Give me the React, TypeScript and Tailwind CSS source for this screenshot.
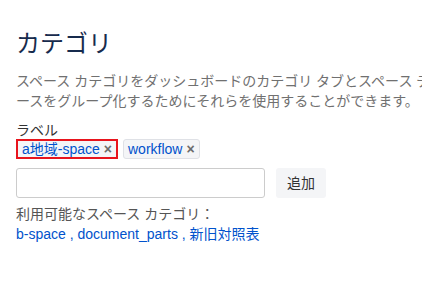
const font = { fontFamily: '"Liberation Sans", "Noto Sans CJK JP", sans-serif' };

const Tag = ({ label, highlighted }: { label: string; highlighted?: boolean }) => (
  <span
    className={
      highlighted
        ? 'inline-flex items-center h-[20px] px-[4px] border-2 border-[#e8141d] bg-[#f4f5f7] text-[#0052cc] text-[14px] leading-none'
        : 'inline-flex items-center h-[20px] px-[4px] border border-[#dfe1e6] rounded-[3px] bg-[#f4f5f7] text-[#0052cc] text-[14px] leading-none'
    }
  >
    {label}
    <span className="ml-[4px] text-[#6b6b6b] text-[14px] font-bold">×</span>
  </span>
);

export default function App() {
  return (
    <div className="w-[422px] h-[289px] overflow-hidden bg-white px-4 pt-[28px]" style={font}>
      <h1 className="text-[24px] leading-[32px] text-[#172b4d] font-normal">カテゴリ</h1>
      <p className="mt-[11px] text-[14px] leading-[20px] text-[#707070] whitespace-nowrap">
        スペース カテゴリをダッシュボードのカテゴリ タブとスペース ディレクトリで使用して、スペ
        <br />
        ースをグループ化するためにそれらを使用することができます。
      </p>
      <div className="mt-[9px] text-[14px] leading-[20px] text-[#333333]">ラベル</div>
      <div className="flex items-center gap-[5px] mt-[-1px]">
        <Tag label="a地域-space" highlighted />
        <Tag label="workflow" />
      </div>
      <div className="flex items-center gap-[11px] mt-[9px]">
        <input className="w-[249px] h-[30px] border border-[#cccccc] rounded-[3px] outline-none" />
        <button className="w-[50px] h-[30px] rounded-[3px] bg-[#f4f5f7] text-[14px] text-[#333333]">追加</button>
      </div>
      <div className="mt-[6px] text-[14px] leading-[20px] text-[#555555]">利用可能なスペース カテゴリ：</div>
      <div className="text-[14px] leading-[20px] text-[#0052cc]">
        <a>b-space</a> , <a>document_parts</a> , <a>新旧対照表</a>
      </div>
    </div>
  );
}
